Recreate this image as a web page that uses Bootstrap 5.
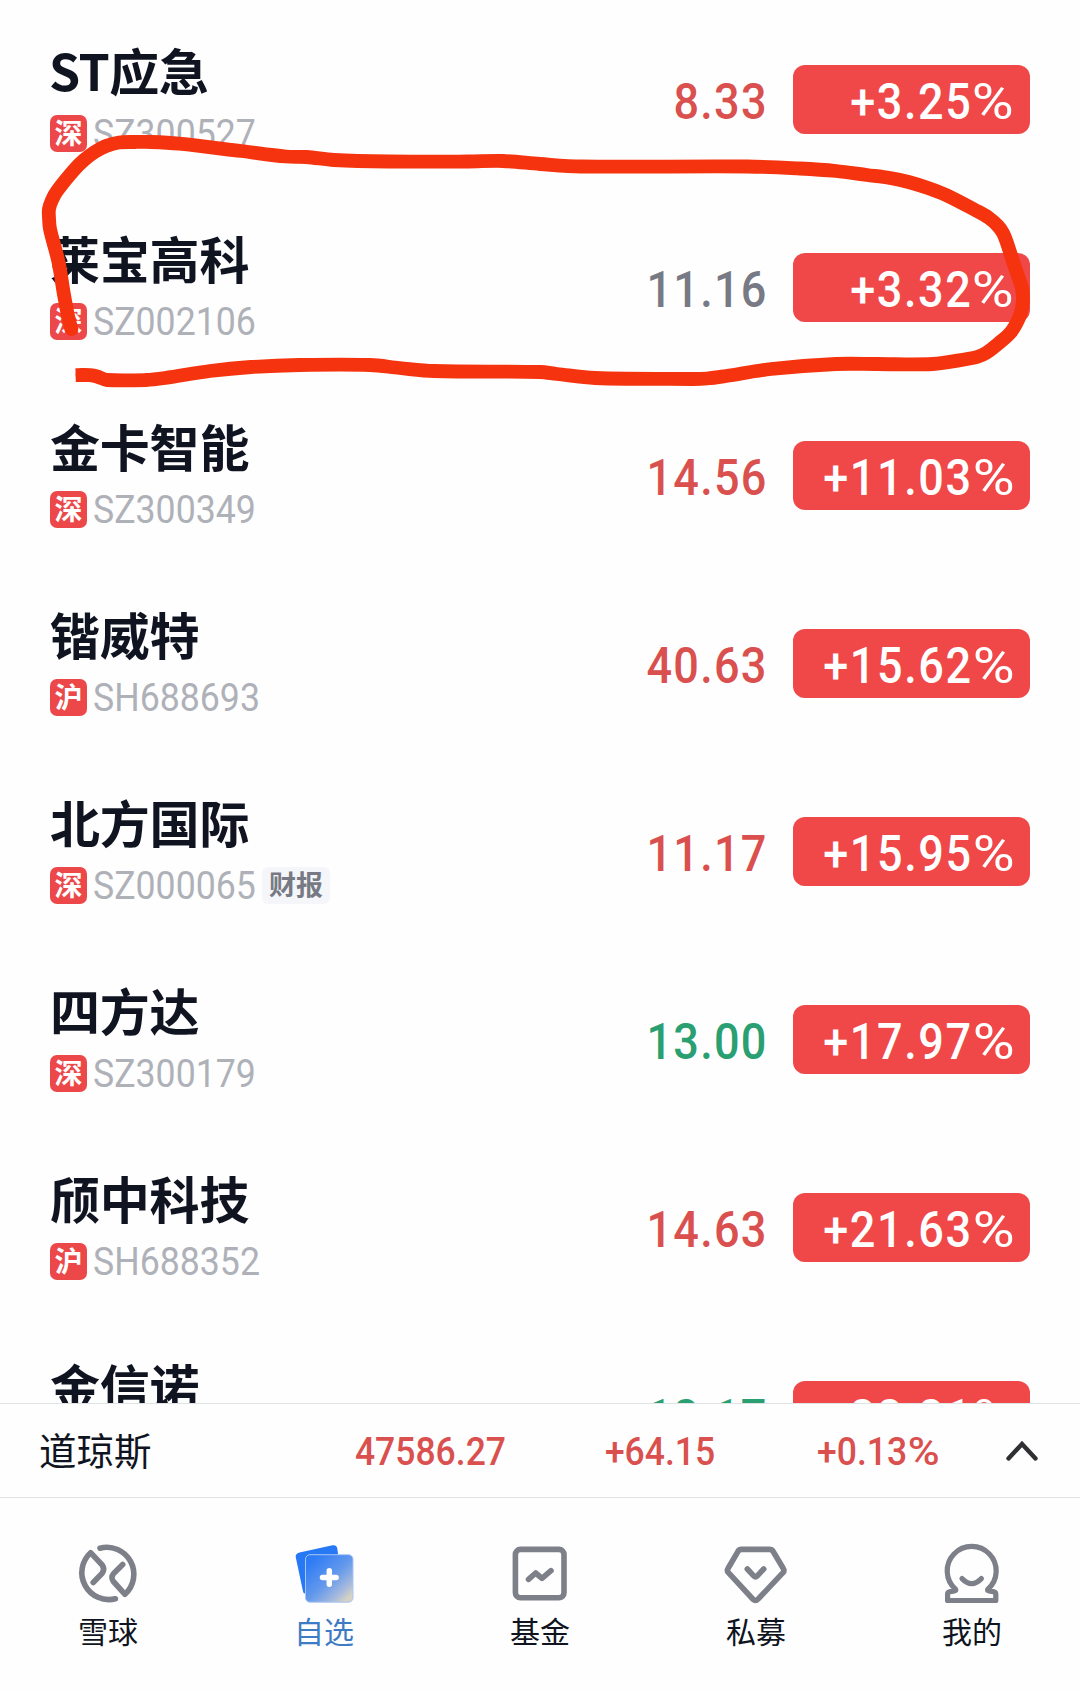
<!DOCTYPE html>
<html lang="zh-CN">
<head>
<meta charset="utf-8">
<meta name="viewport" content="width=device-width, initial-scale=1">
<title>自选</title>
<link href="https://cdn.jsdelivr.net/npm/bootstrap@5.3.0/dist/css/bootstrap.min.css" rel="stylesheet">
<style>
body{font-family:"Noto Sans CJK SC",sans-serif;color:#101421;background:#fefefe;height:1691px;overflow:hidden}
.watch{height:1403px;padding:5.5px 50px 0}
.stock{height:188px;flex:none}
.info{padding-top:35px}
.stock-name{font-size:50px;font-weight:700;line-height:56px;height:56px;margin-bottom:18.5px;letter-spacing:-.2px}
.latin{letter-spacing:-.5px;margin-left:-1px}
.tick{font-family:Roboto,sans-serif;display:inline-block;transform:scaleX(.9);white-space:nowrap}
.mkt{width:37px;height:37px;border-radius:7px;background:#ec484a;color:#fff;font-size:28px;font-weight:700;line-height:35px;text-align:center;margin-right:6px}
.code{font-size:39px;line-height:37px;color:#afb1b9;transform:scaleX(.915);transform-origin:left;height:37px;padding-top:1px;margin-right:-9px}
.report{width:68px;height:37px;border-radius:6px;background:#f5f6f9;color:#777a84;font-size:27px;font-weight:700;line-height:34px;text-align:center}
.price{font-size:50px;font-weight:500;letter-spacing:1.4px;transform-origin:right;margin-right:25px;line-height:69px;padding-top:5px}
.up{color:#d9504f}.flat{color:#777a84}.down{color:#2a9f71}
.pct{width:237px;height:69px;border-radius:12px;background:#f04848;color:#fff;font-size:50px;line-height:69px;padding-right:16px}
.pct .tick{transform-origin:right;letter-spacing:1.8px;font-weight:500;line-height:69px;vertical-align:top;padding-top:2.5px}
.pc{display:inline-block;transform:scaleX(1.27);transform-origin:right;margin-left:9.5px;letter-spacing:0;font-weight:400}
.index-bar .pc{margin-left:7px;transform:scaleX(1.22);font-weight:500}
.index-bar{height:95px;border-top:1.5px solid #e0e3e3;border-bottom:1.5px solid #e0e3e3;padding:0 41px 0 39px;font-size:37.5px}
.idx-name{width:301px;margin-top:-2px}
.index-bar .tick{font-size:39px;font-weight:500;transform:scaleX(.91);transform-origin:right;padding-top:3px}
.c1{width:165px}.c2{width:210px}.c3{width:225px}
.tabs{height:193px;padding-top:44px}
.tabs a{font-size:30px;line-height:40px;color:#101421;text-decoration:none}
.tabs a.on{color:#3d7bc4}
.tabs svg{width:64px;height:64px;margin-bottom:4px}
.ico{fill:none;stroke:#7d7f89;stroke-width:5.6;stroke-linecap:round;stroke-linejoin:round}
.scribble{left:0;top:0;pointer-events:none}
</style>
<script src="https://cdn.jsdelivr.net/npm/bootstrap@5.3.0/dist/js/bootstrap.bundle.min.js"></script>
</head>
<body class="position-relative d-flex flex-column">
<main class="watch d-flex flex-column overflow-hidden flex-shrink-0">
  <div class="stock d-flex"><div class="info flex-grow-1"><div class="stock-name latin">ST应急</div><div class="d-flex"><span class="mkt">深</span><span class="tick code">SZ300527</span></div></div><div class="d-flex align-items-center"><span class="tick price up">8.33</span><div class="pct text-end"><span class="tick">+3.25<span class="pc">%</span></span></div></div></div>
  <div class="stock d-flex"><div class="info flex-grow-1"><div class="stock-name">莱宝高科</div><div class="d-flex"><span class="mkt">深</span><span class="tick code">SZ002106</span></div></div><div class="d-flex align-items-center"><span class="tick price flat">11.16</span><div class="pct text-end"><span class="tick">+3.32<span class="pc">%</span></span></div></div></div>
  <div class="stock d-flex"><div class="info flex-grow-1"><div class="stock-name">金卡智能</div><div class="d-flex"><span class="mkt">深</span><span class="tick code">SZ300349</span></div></div><div class="d-flex align-items-center"><span class="tick price up">14.56</span><div class="pct text-end"><span class="tick">+11.03<span class="pc">%</span></span></div></div></div>
  <div class="stock d-flex"><div class="info flex-grow-1"><div class="stock-name">锴威特</div><div class="d-flex"><span class="mkt">沪</span><span class="tick code">SH688693</span></div></div><div class="d-flex align-items-center"><span class="tick price up">40.63</span><div class="pct text-end"><span class="tick">+15.62<span class="pc">%</span></span></div></div></div>
  <div class="stock d-flex"><div class="info flex-grow-1"><div class="stock-name">北方国际</div><div class="d-flex"><span class="mkt">深</span><span class="tick code">SZ000065</span><span class="report">财报</span></div></div><div class="d-flex align-items-center"><span class="tick price up">11.17</span><div class="pct text-end"><span class="tick">+15.95<span class="pc">%</span></span></div></div></div>
  <div class="stock d-flex"><div class="info flex-grow-1"><div class="stock-name">四方达</div><div class="d-flex"><span class="mkt">深</span><span class="tick code">SZ300179</span></div></div><div class="d-flex align-items-center"><span class="tick price down">13.00</span><div class="pct text-end"><span class="tick">+17.97<span class="pc">%</span></span></div></div></div>
  <div class="stock d-flex"><div class="info flex-grow-1"><div class="stock-name">颀中科技</div><div class="d-flex"><span class="mkt">沪</span><span class="tick code">SH688352</span></div></div><div class="d-flex align-items-center"><span class="tick price up">14.63</span><div class="pct text-end"><span class="tick">+21.63<span class="pc">%</span></span></div></div></div>
  <div class="stock d-flex"><div class="info flex-grow-1"><div class="stock-name">金信诺</div></div><div class="d-flex align-items-center"><span class="tick price down">12.17</span><div class="pct text-end"><span class="tick">+22.21<span class="pc">%</span></span></div></div></div>
</main>
<section class="index-bar d-flex align-items-center flex-shrink-0">
  <span class="idx-name">道琼斯</span>
  <span class="c1 text-end"><span class="tick up">47586.27</span></span>
  <span class="c2 text-end"><span class="tick up">+64.15</span></span>
  <span class="c3 text-end"><span class="tick up">+0.13<span class="pc">%</span></span></span>
  <svg class="ms-auto" width="34" height="24" viewBox="0 0 34 24" fill="none" stroke="#2f3033" stroke-width="4.4" stroke-linecap="round" stroke-linejoin="miter"><path d="M3.5 19.5 17 5l13.500 14.500"/></svg>
</section>
<nav class="tabs d-flex flex-shrink-0">
  <a href="#" class="col d-flex flex-column align-items-center"><svg viewBox="0 0 64 64" class="ico"><path d="M24 6.200A27 27 0 0 1 49 52.300L37.400 39.500Q34.500 35.500 37.400 31.800L46.700 22.500M39.400 56.800A27 27 0 0 1 14.600 10.700L26.200 23Q29.200 27.200 26.200 31.200L17.200 40.500"/></svg>雪球</a>
  <a href="#" class="col d-flex flex-column align-items-center on"><svg viewBox="0 0 64 64"><defs><linearGradient id="g" x1=".15" y1=".1" x2="1" y2="1"><stop offset="0" stop-color="#2e7cf5"/><stop offset=".45" stop-color="#6499ec"/><stop offset=".75" stop-color="#a9bbdc"/><stop offset=".9" stop-color="#d7d3c3"/><stop offset="1" stop-color="#ced0d2"/></linearGradient></defs><path d="M7.500 10.500 40.500 3.300Q44.500 2.600 45.300 6.500L51 48 12.500 52.500Q10.800 50 10.500 47L3.700 15Q3.300 11.500 7.500 10.500Z" fill="#2678f4"/><path d="M46 12H62V61H12V52Z" fill="#fefefe"/><rect x="13.500" y="12.700" width="47.500" height="47.500" rx="4.500" fill="url(#g)" stroke="#a8c5f3" stroke-width="1"/><path d="M37.300 28.700v13.600M30.500 35.500h13.600" stroke="#fff" stroke-width="5.500" stroke-linecap="round"/></svg>自选</a>
  <a href="#" class="col d-flex flex-column align-items-center"><svg viewBox="0 0 64 64" class="ico"><rect x="7.400" y="7.400" width="48.600" height="48.400" rx="5"/><path d="M20.500 37.300 27.700 31 34 36.300 43 28.700"/></svg>基金</a>
  <a href="#" class="col d-flex flex-column align-items-center"><svg viewBox="0 0 64 64" class="ico"><path d="M17.500 7.400H45.500Q47.800 7.400 49 9.300L59.300 26.500Q60.700 28.700 59 30.700L34 57.200Q31.500 59.800 29 57.200L4.400 30.700Q2.600 28.700 4 26.500L14 9.300Q15.200 7.400 17.500 7.400Z"/><path d="M23.300 27 30.200 34.300Q31.500 35.600 32.800 34.300L39.700 27"/></svg>私募</a>
  <a href="#" class="col d-flex flex-column align-items-center"><svg viewBox="0 0 64 64" class="ico" style="stroke-width:5.2"><path d="M15.500 47.300A24.500 24.500 0 1 1 47.900 47.300Q46.500 48.900 51.500 49.400Q55.800 49.600 55.800 52V58.500H7.600V52Q7.600 49.600 11.900 49.400Q16.900 48.900 15.500 47.300Z"/><path d="M22 36.600Q31.700 46.600 41.400 36.600"/></svg>我的</a>
</nav>
<svg class="scribble position-absolute" width="1080" height="420" viewBox="0 0 1080 420" fill="none" stroke="#f5330e" stroke-width="13.800" stroke-linejoin="round">
<circle cx="71.500" cy="329" r="6.900" fill="#f5330e" stroke="none"/>
<path id="loop"/><circle cx="82.500" cy="375" r="6.900" fill="#f5330e" stroke="none"/></svg>
<script>
// Hand-drawn loop: pen samples joined by a smooth curve
const p=[[71.6,330],[68,316],[63.7,293],[58.5,262],[50,229],[49,218],[49,209],[52,200],[57,191],[74,170],[84,160],[94.7,152],[106,146],[119,142.5],[135,142],[151.5,142],[179,143.7],[241,151],[286,156.5],[306.5,157],[334,160],[389,161.5],[468,161.5],[503,161],[540,164],[581,166.5],[747,166.5],[800,168.5],[836,171],[867,175],[890,178],[908.5,182],[928,188],[946,195],[977,211],[989,218],[998,226],[1003,233],[1006.6,241.7],[1012.5,260],[1018,276],[1022,288],[1023,298],[1022,308],[1019,318],[1011,332],[999,343],[986,353],[977,357],[967,359],[932.6,364],[877.5,364],[836,364],[771,369],[726,376],[707,378.5],[691.5,379],[595,378],[557,374],[540,372],[434,371],[399.5,368],[370,365],[299.6,365],[251,367],[210,371],[165,378],[146,380],[107,380],[97,376.500],[90,375.200],[83,375],[75.600,375.200]];
let d="M"+p[0];
for(let i=0;i<p.length-1;i++){
  const a=p[i-1]||p[i],b=p[i],c=p[i+1],e=p[i+2]||c,l=Math.hypot(c[0]-b[0],c[1]-b[1])/3,
  u=(s,t)=>{const h=Math.hypot(t[0]-s[0],t[1]-s[1]);return[(t[0]-s[0])/h*l,(t[1]-s[1])/h*l]},m=u(a,c),n=u(b,e);
  d+=`C${b[0]+m[0]} ${b[1]+m[1]} ${c[0]-n[0]} ${c[1]-n[1]} ${c[0]} ${c[1]}`;
}
document.getElementById("loop").setAttribute("d",d);
</script>
</body>
</html>
